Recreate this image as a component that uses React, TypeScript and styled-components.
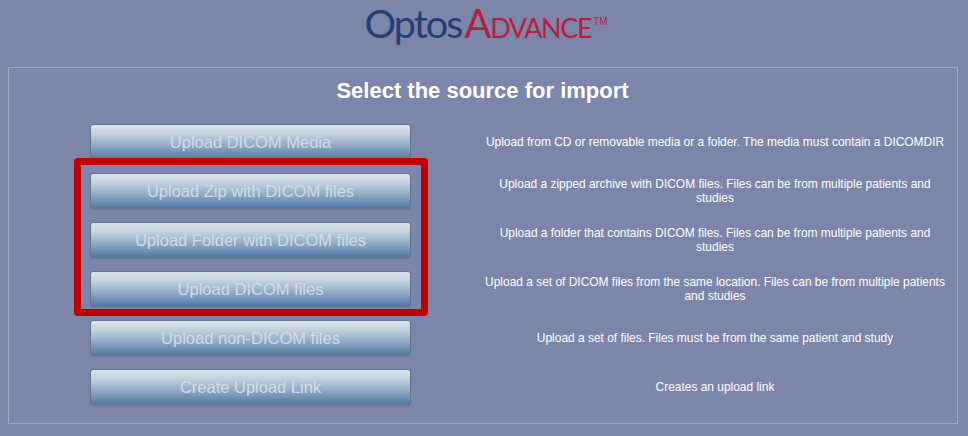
import React from "react";
import styled, { createGlobalStyle } from "styled-components";

const Global = createGlobalStyle`
  html, body { margin: 0; padding: 0; background: #7c86aa; }
  body { font-family: "Liberation Sans", Arial, sans-serif; width: 968px; height: 436px; overflow: hidden; }
`;
const Page = styled.div`
  width: 968px; height: 436px; display: flex; flex-direction: column; align-items: stretch;
  padding: 0 10px 12px 8px; box-sizing: border-box;
`;
const Header = styled.header`
  height: 67px; display: flex; justify-content: center; align-items: flex-start; box-sizing: border-box; flex: none;
`;
const Logo = styled.div`
  font-family: Lato, "Open Sans", sans-serif; font-weight: 400; display: flex; align-items: baseline; line-height: 46px; margin-left: 6px;
`;
const LogoOptos = styled.span`
  color: #263f73; font-size: 39.5px; letter-spacing: -1.9px; margin-right: 3px;
`;
const LogoAdvance = styled.span`
  color: #b91e3f; font-size: 27px; letter-spacing: -1.4px;
  &::first-letter { font-size: 40px; }
`;
const LogoTm = styled.span`
  color: #b91e3f; font-size: 10px; line-height: 10px; align-self: flex-start; margin-top: 17px; margin-left: 2px; font-family: "Liberation Sans", sans-serif; font-weight: 400;
`;
const Frame = styled.main`
  position: relative; flex: 1; border: 1px solid #a0a9c6; display: flex; flex-direction: column; box-sizing: border-box;
`;
const Title = styled.h1`
  margin: 0 1px 0 0; height: 56px; padding-bottom: 11px; display: flex; align-items: center; justify-content: center; flex: none;
  color: #fff; font-size: 22px; font-weight: 700; box-sizing: border-box;
`;
const Rows = styled.div`
  display: flex; flex-direction: column; gap: 13px;
`;
const Row = styled.div`
  display: flex; align-items: center; height: 36px;
`;
const UploadButton = styled.button`
  width: 321px; height: 36px; margin-left: 81px; flex: none; padding: 0; box-sizing: border-box;
  border: 1px solid #69728f; border-radius: 3px; box-shadow: 0 1px 1px #6f7899;
  background: linear-gradient(to bottom, #dbe3ea 0%, #c6d2de 25%, #8ea8c4 62%, #507aa6 100%);
  color: #d3dbe6; font-family: "Liberation Sans", sans-serif; font-size: 16.5px; text-align: center;
`;
const Description = styled.p`
  margin: 0 0 0 71px; width: 466px; flex: none; color: #fff; font-size: 11.95px; line-height: 14.5px; text-align: center;
`;
const Highlight = styled.div`
  position: absolute; left: 65px; top: 90px; width: 354px; height: 158px; box-sizing: border-box;
  border: 7px solid #c00000; border-radius: 4px; pointer-events: none;
`;

const items: [string, string][] = [
  ["Upload DICOM Media", "Upload from CD or removable media or a folder. The media must contain a DICOMDIR"],
  ["Upload Zip with DICOM files", "Upload a zipped archive with DICOM files. Files can be from multiple patients and studies"],
  ["Upload Folder with DICOM files", "Upload a folder that contains DICOM files. Files can be from multiple patients and studies"],
  ["Upload DICOM files", "Upload a set of DICOM files from the same location. Files can be from multiple patients and studies"],
  ["Upload non-DICOM files", "Upload a set of files. Files must be from the same patient and study"],
  ["Create Upload Link", "Creates an upload link"],
];

export default function App() {
  return (
    <Page>
      <Global />
      <Header>
        <Logo>
          <LogoOptos>Optos</LogoOptos>
          <LogoAdvance>ADVANCE</LogoAdvance>
          <LogoTm>TM</LogoTm>
        </Logo>
      </Header>
      <Frame>
        <Title>Select the source for import</Title>
        <Rows>
          {items.map(([label, text]) => (
            <Row key={label}>
              <UploadButton>{label}</UploadButton>
              <Description>{text}</Description>
            </Row>
          ))}
        </Rows>
        <Highlight />
      </Frame>
    </Page>
  );
}
